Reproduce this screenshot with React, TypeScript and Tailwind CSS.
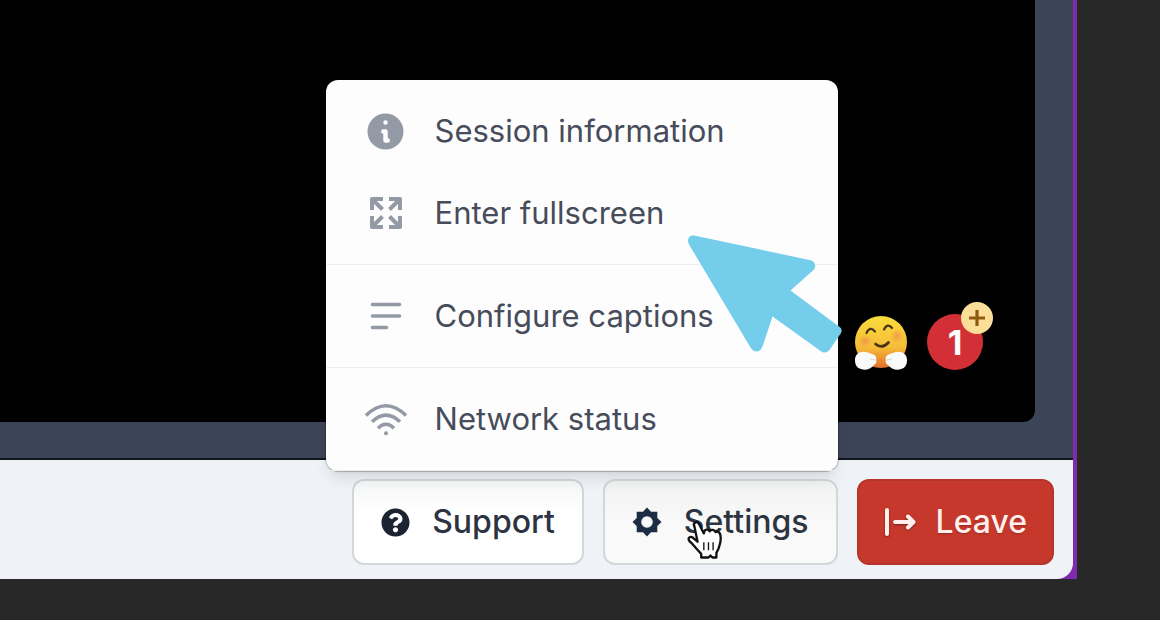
import { useState, type ReactNode } from 'react'
import { FaQuestionCircle } from 'react-icons/fa'
import { HiInformationCircle } from 'react-icons/hi'

// ---------------------------------------------------------------------------
// Icons
// ---------------------------------------------------------------------------

function FullscreenIcon() {
  return (
    <svg viewBox="0 0 32 32" className="size-8 shrink-0" fill="none" stroke="currentColor" strokeWidth="4" strokeLinejoin="round" aria-hidden="true">
      <path d="M13 2H2v11M2 2l10.500 10.500" />
      <path d="M19 2h11v11M30 2L19.500 12.500" />
      <path d="M13 30H2V19M2 30l10.500-10.500" />
      <path d="M19 30h11V19M30 30L19.500 19.500" />
    </svg>
  )
}

function CaptionsIcon() {
  return (
    <svg viewBox="0 0 32 30" className="h-[30px] w-8" fill="none" stroke="currentColor" strokeWidth="3.6" strokeLinecap="round" aria-hidden="true">
      <path d="M2.500 3.500h27M2.500 15h27M2.500 26.500h14" />
    </svg>
  )
}

function WifiIcon() {
  return (
    <svg viewBox="0 0 42 33" className="h-[33px] w-[42px]" fill="none" stroke="currentColor" strokeWidth="3.4" aria-hidden="true">
      <path d="M1 12.500Q21-7 41 12.500" />
      <path d="M7 18.800Q21 5.500 35 18.800" />
      <path d="M13 25.200Q21 17.200 29 25.200" />
      <circle cx="21" cy="30.200" r="2" fill="currentColor" stroke="none" />
    </svg>
  )
}

function GearIcon() {
  return (
    <svg viewBox="-15 -15 30 30" className="size-[30px]" fill="currentColor" aria-hidden="true">
      <path
        fillRule="evenodd"
        d="M0-14.500L4-10.300 10.300-10.300 10.300-4 14.500 0 10.300 4V10.300H4L0 14.500-4 10.300H-10.300V4L-14.500 0-10.300-4V-10.300H-4ZM0-5.800A5.800 5.800 0 1 0 0 5.800 5.800 5.800 0 1 0 0-5.800Z"
      />
    </svg>
  )
}

function LeaveIcon() {
  return (
    <svg viewBox="0 0 32 28" className="h-7 w-8 drop-shadow-[0_1px_1px_rgba(0,0,0,0.4)]" fill="none" stroke="currentColor" strokeWidth="4" strokeLinecap="round" strokeLinejoin="round" aria-hidden="true">
      <path d="M3 2v24M11 14h18M24 8.500l5.500 5.500-5.500 5.500" />
    </svg>
  )
}

function HugIcon() {
  return (
    <svg viewBox="0 0 52 54" className="h-[54px] w-[52px]" aria-hidden="true">
      <defs>
        <linearGradient id="face" x1="0" y1="0" x2="0" y2="1">
          <stop offset="0" stopColor="#f9dc3c" />
          <stop offset="0.6" stopColor="#f6bd38" />
          <stop offset="1" stopColor="#e0702c" />
        </linearGradient>
        <radialGradient id="cheek">
          <stop offset="0" stopColor="#ef8350" stopOpacity="0.65" />
          <stop offset="1" stopColor="#ef8350" stopOpacity="0" />
        </radialGradient>
      </defs>
      <circle cx="26" cy="26" r="26" fill="url(#face)" />
      <circle cx="10" cy="25" r="7" fill="url(#cheek)" />
      <circle cx="42" cy="20" r="7" fill="url(#cheek)" />
      <g fill="none" stroke="#4a3418" strokeWidth="2.200" strokeLinecap="round">
        <path d="M11.500 17q3.500-7.500 8.500-1.500M29 13.500q3.500-7 8-1.500" />
        <path d="M20.500 28q6.500 5.500 13-1.500" strokeWidth="2.600" />
      </g>
      <path d="M0 44c0-6 5-9 10-8 3 0 4 1 7 2 4 1 5 4 4 6 1 2 0 4-2 5-3 4-9 6-13 4-4-1-6-4-6-9z" fill="#fafafa" />
      <path d="M52 44c0-6-5-9-10-8-3 0-4 1-7 2-4 1-5 4-4 6-1 2 0 4 2 5 3 4 9 6 13 4 4-1 6-4 6-9z" fill="#fafafa" />
      <path d="M15 43l5 1M37 43l-5 1" stroke="#d5d5d5" strokeWidth="1.200" fill="none" />
    </svg>
  )
}

function PointerArrow() {
  return (
    <svg viewBox="0 0 155 118" className="pointer-events-none absolute top-[155px] -right-[5px] h-[118px] w-[155px]" aria-hidden="true">
      <path
        fill="#74ceeb"
        d="M6 .5L121.500 25C127 26 129 31 125.500 35L102.500 55.500 151 91.500Q155 94 153 98L142.500 113.500Q139 119 134 117L84.500 81.500 74.500 111.500C72 118 66 118 62.500 112.500L1 9.500C-1.500 5 1-.5 6 .5Z"
      />
    </svg>
  )
}

function HandCursor() {
  return (
    <svg viewBox="0 0 112 126" className="pointer-events-none absolute top-10 left-[83px] h-[42px] w-[37px]" aria-hidden="true">
      <path
        fill="#fff"
        stroke="#111"
        strokeWidth="7"
        strokeLinejoin="round"
        d="M26 24C19 10 33 3 40 15L54 43C55 29 68 29 72 37C75 30 87 31 89 39C94 35 103 39 104 48C108 66 101 81 98 90L92 102V116H80L74 110 68 116H46V105L34 92C25 82 19 73 10 66C4 56 13 50 22 57L35 68Z"
      />
      <path d="M54 70v24M68 70v24M82 70v24" stroke="#111" strokeWidth="4" />
    </svg>
  )
}

// ---------------------------------------------------------------------------
// Settings menu
// ---------------------------------------------------------------------------

interface MenuEntry {
  label: string
  icon: ReactNode
}

const MENU_GROUPS: MenuEntry[][] = [
  [
    { label: 'Session information', icon: <HiInformationCircle className="size-[45px] shrink-0" /> },
    { label: 'Enter fullscreen', icon: <FullscreenIcon /> },
  ],
  [{ label: 'Configure captions', icon: <CaptionsIcon /> }],
  [{ label: 'Network status', icon: <WifiIcon /> }],
]

function SettingsMenu() {
  return (
    <div className="absolute right-0 bottom-full z-10 mb-2 w-[512px] divide-y divide-[#eceff1] rounded-xl bg-[#fdfdfe] shadow-lg ring-1 ring-black/20">
      {MENU_GROUPS.map(group => (
        <div key={group[0].label} className="py-2.5">
          {group.map(({ label, icon }) => (
            <button key={label} type="button" className="flex h-[82px] w-full items-center gap-7 px-[39px] text-left text-[31px] font-normal text-[#464c59]">
              <span className="flex w-[42px] justify-center text-[#9499a6]">{icon}</span>
              {label}
            </button>
          ))}
        </div>
      ))}
      <PointerArrow />
    </div>
  )
}

// ---------------------------------------------------------------------------
// Page
// ---------------------------------------------------------------------------

export default function App() {
  const [menuOpen, setMenuOpen] = useState(true)

  return (
    <div className="h-screen bg-[#282828] pr-[83px] pb-[41px] font-['Inter',sans-serif]">
      <div className="h-full bg-[#7f2bae] pr-1">
        <div className="flex h-full flex-col rounded-br-2xl bg-[#eff3f7]">
          <main className="flex flex-1 flex-col bg-[#3b4557] pr-[38px] pb-9">
            <div className="flex flex-1 items-end justify-end gap-5 rounded-br-xl bg-black pr-[52px] pb-[52px]">
              <HugIcon />
              <div className="relative flex size-14 items-center justify-center rounded-full bg-[#d32f37] text-[34px] font-bold text-white">
                1
                <span className="absolute -top-3 -right-2.5 flex size-8 items-center justify-center rounded-full bg-[#fbdf98]">
                  <svg viewBox="0 0 18 18" className="size-[18px]" stroke="#8d5a10" strokeWidth="3.2" aria-hidden="true">
                    <path d="M9 1v16M1 9h16" />
                  </svg>
                </span>
              </div>
            </div>
          </main>

          <footer className="flex justify-end gap-[19px] rounded-br-2xl border-t-2 border-[#12161d] pt-[19px] pr-[19px] pb-3.5 text-[32px] font-medium text-[#2c3442]">
            <button type="button" className="flex h-[86px] items-center gap-[22px] rounded-xl border-2 border-[#d3d6da] bg-linear-to-b from-[#f6f7f7] to-white to-40% px-[27px]">
              <FaQuestionCircle className="size-[29px] text-[#1c2432]" />
              Support
            </button>
            <div className="relative">
              <button
                type="button"
                onClick={() => setMenuOpen(!menuOpen)}
                aria-expanded={menuOpen}
                className="flex h-[86px] items-center gap-[22px] rounded-xl border-2 border-[#d3d6da] bg-linear-to-b from-[#f1f2f2] to-[#f9f9fa] to-50% px-[27px]"
              >
                <span className="text-[#1c2c42]">
                  <GearIcon />
                </span>
                Settings
              </button>
              {menuOpen && <SettingsMenu />}
              <HandCursor />
            </div>
            <button type="button" className="flex h-[86px] items-center gap-5 rounded-xl border-2 border-[#b5352c] bg-[#c7382c] px-[25px] text-[#fff0ee] text-shadow-sm">
              <LeaveIcon />
              Leave
            </button>
          </footer>
        </div>
      </div>
    </div>
  )
}
